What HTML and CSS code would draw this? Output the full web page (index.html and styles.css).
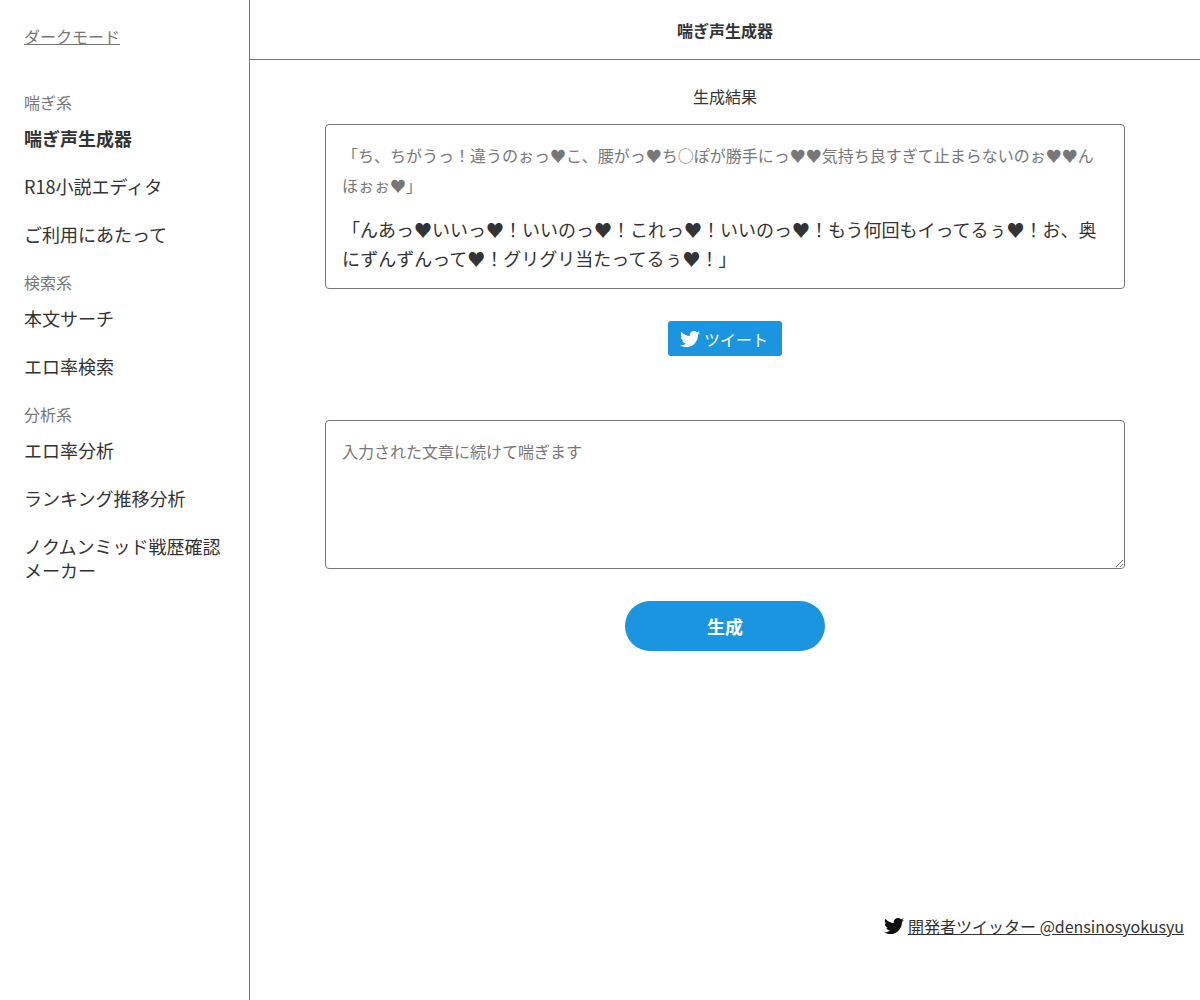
FILE: index.html
```html
<!DOCTYPE html>
<html lang="ja">
<head>
<meta charset="utf-8">
<title>喘ぎ声生成器</title>
<link rel="stylesheet" href="styles.css">
</head>
<body>
<div class="layout">
  <aside class="sidebar">
    <a class="dark-toggle" href="#">ダークモード</a>
    <nav class="nav">
      <div class="nav-label first">喘ぎ系</div>
      <a class="nav-item active" href="#">喘ぎ声生成器</a>
      <a class="nav-item" href="#">R18小説エディタ</a>
      <a class="nav-item" href="#">ご利用にあたって</a>
      <div class="nav-label">検索系</div>
      <a class="nav-item" href="#">本文サーチ</a>
      <a class="nav-item" href="#">エロ率検索</a>
      <div class="nav-label">分析系</div>
      <a class="nav-item" href="#">エロ率分析</a>
      <a class="nav-item" href="#">ランキング推移分析</a>
      <a class="nav-item" href="#">ノクムンミッド戦歴確認メーカー</a>
    </nav>
  </aside>
  <div class="main">
    <header class="header">喘ぎ声生成器</header>
    <section class="content">
      <h2 class="result-title">生成結果</h2>
      <div class="result-box">
        <p class="prompt">「ち、ちがうっ！違うのぉっ♥こ、腰がっ♥ち○ぽが勝手にっ♥♥気持ち良すぎて止まらないのぉ♥♥んほぉぉ♥」</p>
        <p class="generated">「んあっ♥いいっ♥！いいのっ♥！これっ♥！いいのっ♥！もう何回もイってるぅ♥！お、奥にずんずんって♥！グリグリ当たってるぅ♥！」</p>
      </div>
      <a class="tweet" href="#">
        <svg class="bird-w" viewBox="0 0 512 512" aria-hidden="true"><path d="M459.37 151.716c.325 4.548.325 9.097.325 13.645 0 138.72-105.583 298.558-298.558 298.558-59.452 0-114.68-17.219-161.137-47.106 8.447.974 16.568 1.299 25.34 1.299 49.055 0 94.213-16.568 130.274-44.832-46.132-.975-84.792-31.188-98.112-72.772 6.498.974 12.995 1.624 19.818 1.624 9.421 0 18.843-1.3 27.614-3.573-48.081-9.747-84.143-51.98-84.143-102.985v-1.299c13.969 7.797 30.214 12.67 47.431 13.319-28.264-18.843-46.781-51.005-46.781-87.391 0-19.492 5.197-37.36 14.294-52.954 51.655 63.675 129.3 105.258 216.365 109.807-1.624-7.797-2.599-15.918-2.599-24.04 0-57.828 46.782-104.934 104.934-104.934 30.213 0 57.502 12.67 76.67 33.137 23.715-4.548 46.456-13.32 66.599-25.34-7.798 24.366-24.366 44.833-46.132 57.827 21.117-2.273 41.584-8.122 60.426-16.243-14.292 20.791-32.161 39.308-52.628 54.253z"/></svg>
        ツイート
      </a>
      <textarea class="input" placeholder="入力された文章に続けて喘ぎます"></textarea>
      <button class="generate" type="button">生成</button>
    </section>
    <footer class="footer">
      <svg class="bird-k" viewBox="0 0 512 512" aria-hidden="true"><path d="M459.37 151.716c.325 4.548.325 9.097.325 13.645 0 138.72-105.583 298.558-298.558 298.558-59.452 0-114.68-17.219-161.137-47.106 8.447.974 16.568 1.299 25.34 1.299 49.055 0 94.213-16.568 130.274-44.832-46.132-.975-84.792-31.188-98.112-72.772 6.498.974 12.995 1.624 19.818 1.624 9.421 0 18.843-1.3 27.614-3.573-48.081-9.747-84.143-51.98-84.143-102.985v-1.299c13.969 7.797 30.214 12.67 47.431 13.319-28.264-18.843-46.781-51.005-46.781-87.391 0-19.492 5.197-37.36 14.294-52.954 51.655 63.675 129.3 105.258 216.365 109.807-1.624-7.797-2.599-15.918-2.599-24.04 0-57.828 46.782-104.934 104.934-104.934 30.213 0 57.502 12.67 76.67 33.137 23.715-4.548 46.456-13.32 66.599-25.34-7.798 24.366-24.366 44.833-46.132 57.827 21.117-2.273 41.584-8.122 60.426-16.243-14.292 20.791-32.161 39.308-52.628 54.253z"/></svg>
      <a class="dev-link" href="#">開発者ツイッター @densinosyokusyu</a>
    </footer>
  </div>
</div>
</body>
</html>
```
FILE: styles.css
```css
* { box-sizing: border-box; }
html, body { margin: 0; height: 100%; }
body {
  font-family: "Noto Sans CJK JP", "Noto Sans", sans-serif;
  font-size: 16px;
  color: #333;
  background: #fff;
}
a { color: inherit; }
.layout { display: flex; height: 1000px; }
.sidebar {
  width: 250px;
  flex: none;
  border-right: 1px solid #777;
  padding: 24px 24px 0 24px;
}
.dark-toggle { display: block; width: max-content; color: #777; line-height: 24px; font-size: 16px; }
.nav { margin-top: 42px; }
.nav-label { color: #777; font-size: 16px; line-height: 24px; margin-top: 12px; }
.nav-label.first { margin-top: 0; }
.nav-item {
  display: block;
  text-decoration: none;
  font-size: 18px;
  line-height: 24px;
  padding: 12px 0;
}
.nav-item.active { font-weight: 700; }
.main { flex: 1; display: flex; flex-direction: column; min-width: 0; }
.header {
  height: 60px;
  flex: none;
  border-bottom: 1px solid #777;
  display: flex;
  align-items: center;
  justify-content: center;
  font-weight: 700;
  font-size: 16px;
}
.content { flex: 1; display: flex; flex-direction: column; align-items: center; padding-top: 24px; }
.result-title { margin: 0; font-size: 16px; font-weight: 400; line-height: 24px; }
.result-box {
  width: 800px;
  margin-top: 16px;
  height: 165px;
  border: 1px solid #777;
  border-radius: 4px;
  padding: 15px 16px;
}
.prompt { margin: 0; color: #777; font-size: 16px; line-height: 30.4px; }
.generated { margin: 14px 0 0; font-size: 18px; line-height: 28.8px; color: #333; }
.tweet {
  margin-top: 32px;
  width: 114px;
  height: 35px;
  display: flex;
  align-items: center;
  justify-content: center;
  gap: 4px;
  padding-right: 2px;
  background: #1b95e0;
  color: #fff;
  border-radius: 3px;
  text-decoration: none;
  font-size: 16px;
}
.bird-w { width: 20px; height: 20px; fill: #fff; }
.bird-k { width: 20px; height: 20px; fill: #111; }
.input {
  display: block;
  width: 800px;
  height: 149px;
  margin-top: 64px;
  border: 1px solid #777;
  border-radius: 4px;
  padding: 16px;
  font: inherit;
  line-height: 28px;
  color: #333;
  background: #fff;
}
.input::placeholder { color: #777; opacity: 1; }
.generate {
  margin-top: 32px;
  width: 200px;
  height: 50px;
  border: 0;
  border-radius: 25px;
  background: #1b95e0;
  color: #fff;
  font: inherit;
  font-size: 18px;
  font-weight: 700;
}
.footer {
  flex: none;
  display: flex;
  justify-content: flex-end;
  align-items: center;
  gap: 4px;
  padding: 0 16px 62px 0;
  line-height: 24px;
}
```
